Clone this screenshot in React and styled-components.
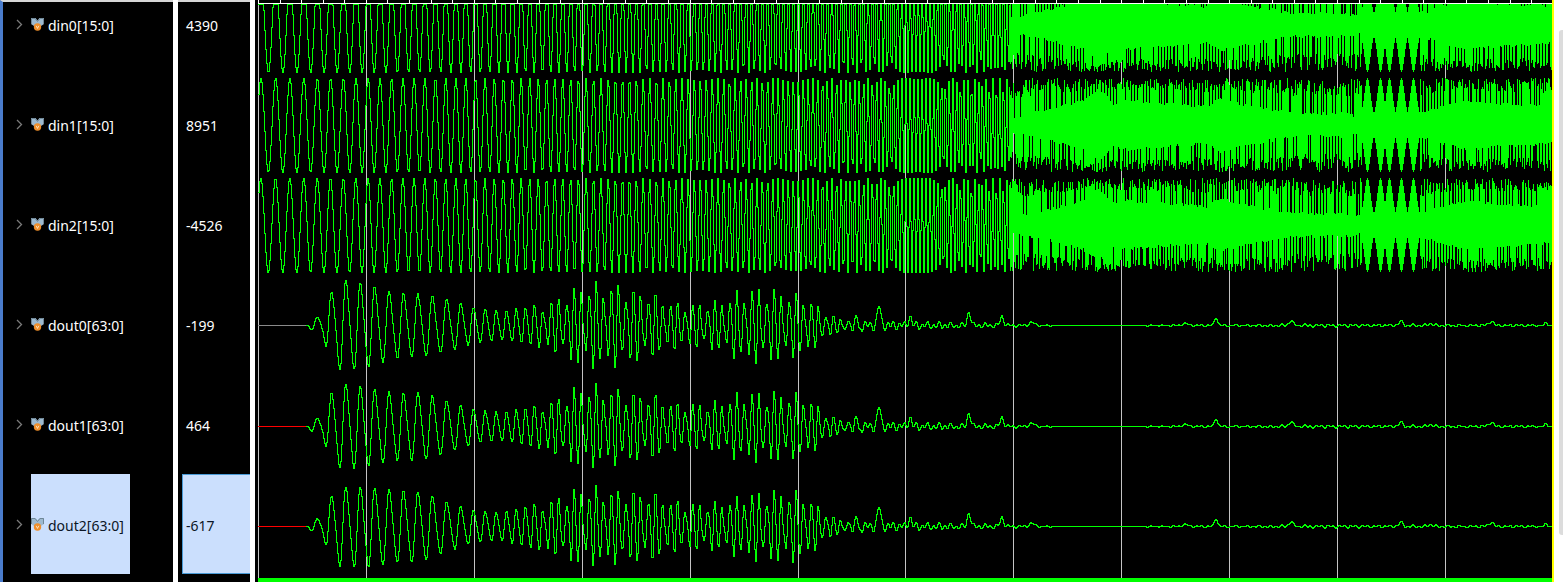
import React from "react"
import styled, { createGlobalStyle } from "styled-components"

const signals = [
    { name: "din0[15:0]", value: "4390" },
    { name: "din1[15:0]", value: "8951" },
    { name: "din2[15:0]", value: "-4526" },
    { name: "dout0[63:0]", value: "-199" },
    { name: "dout1[63:0]", value: "464" },
    { name: "dout2[63:0]", value: "-617", selected: true },
]

const LEFT = 258
const RIGHT = 1552
const CHIRP_END = 1010

const rng = (seed) => () => {
    seed = (seed + 0x6d2b79f5) | 0
    let t = Math.imul(seed ^ (seed >>> 15), 1 | seed)
    t = (t + Math.imul(t ^ (t >>> 7), 61 | t)) ^ t
    return ((t ^ (t >>> 14)) >>> 0) / 4294967296
}

const lerpTable = (table, x) => {
    if (x <= table[0][0]) return table[0][1]
    for (let i = 1; i < table.length; i++) {
        if (x <= table[i][0]) {
            const [x0, y0] = table[i - 1]
            const [x1, y1] = table[i]
            return y0 + ((y1 - y0) * (x - x0)) / (x1 - x0)
        }
    }
    return table[table.length - 1][1]
}

// chirp phase in cycles, t = pixels from the left edge
const chirpPhase = (t) => 0.067 * t + 0.00006 * t * t + (2.4e-7 * t * t * t) / 3

// half width of the solid core of the inputs, where the chirp has aliased
const coreTable = [
    [1010, 6], [1050, 14], [1083, 23], [1098, 35], [1113, 20], [1127, 23],
    [1160, 20], [1207, 17], [1220, 25], [1237, 20], [1293, 10], [1343, 10], [1360, 7],
    [1420, 10], [1443, 17], [1467, 23], [1493, 20], [1552, 17],
]
const leaves = [1367, 1380, 1389, 1401, 1413]

const dinPath = (center, phase, seed) => {
    const rand = rng(seed)
    const clip = (y) => Math.min(center + 47, Math.max(4, y))
    let d = `M${LEFT} ${Math.round(clip(center - 47 * Math.sin(phase))) + 0.5}`
    for (let x = LEFT + 1; x < CHIRP_END; x++) {
        const y = clip(center - 47 * Math.sin(phase + 2 * Math.PI * chirpPhase(x - LEFT)))
        d += `H${x + 0.5}V${Math.round(y) + 0.5}`
    }
    for (let x = CHIRP_END; x < RIGHT; x++) {
        const core = lerpTable(coreTable, x)
        const inLeaves = x > 1361 && x < 1420
        const leaf = leaves.reduce((m, c) => Math.max(m, Math.exp(-((x - c) ** 2) / 18)), 0)
        const reach = () => {
            if (inLeaves) return 8 + 39 * leaf
            const open = x % 3 === 0 ? 0.4 : 0.92
            if (rand() < open) return core + (47 - core) * (0.5 + rand() * 0.5)
            return core + rand() * 3
        }
        const top = Math.round(clip(center - reach()))
        const bottom = Math.round(clip(center + reach()))
        d += `M${x + 0.5} ${top}V${bottom}`
    }
    return d
}

const outEnvelope = [
    [306, 0], [312, 6], [322, 11], [328, 30], [340, 44], [362, 44], [395, 36], [425, 32], [450, 24], [475, 17],
    [500, 15], [525, 20], [550, 27], [575, 38], [590, 42], [625, 41], [655, 36], [668, 27], [690, 23], [720, 25],
    [745, 37], [775, 39], [805, 33], [822, 16], [838, 7], [860, 5], [905, 4], [1000, 2], [1030, 1], [1060, 0.3],
    [1120, 0.2], [1150, 0.6], [1300, 1.4], [1520, 1.2], [1552, 0.4],
]
const outBlips = [
    [878, 20, 1.6], [856, 6, 1.5], [909, 9, 1.6], [968, 14, 1.6], [1001, 9, 1.8], [1031, 3, 2.5], [1185, 2, 3],
    [1215, 8, 1.6], [1290, 5, 2], [1400, 4, 2], [1430, 2, 2], [1490, 4, 2.5], [1545, 3, 1.2],
]
const outFrequency = [[306, 0.0694], [450, 0.0694], [570, 0.135], [1552, 0.135]]

const doutPath = (center, seed) => {
    const rand = rng(seed)
    let d = `M306 ${center + 0.5}`
    // first big peak of the outputs sits at x = 331
    let cycles = 0.25 + (306 - 331) * 0.0694
    for (let x = 307; x < RIGHT; x++) {
        cycles += lerpTable(outFrequency, x)
        const env = lerpTable(outEnvelope, x)
        const beat = x > 540 && x < 860 ? 0.3 * Math.sin(2 * Math.PI * cycles * 1.37 + 0.6) : 0
        const wobble = x < 860 ? 0.94 + 0.06 * Math.sin(x * 0.047 + seed) + (rand() - 0.5) * 0.06 : 1
        const wave = (Math.sin(2 * Math.PI * cycles) + 0.14 * Math.sin(4 * Math.PI * cycles) + beat) / (beat ? 1.25 : 1)
        const noise = x >= 860 ? Math.sin(x * 1.1) * 0.7 + Math.sin(x * 0.53 + 1) * 0.5 : wave
        const bump = outBlips.reduce((sum, [c, a, w]) => sum + a * Math.exp(-((x - c) ** 2) / (2 * w * w)), 0)
        const y = Math.round(center - env * wobble * noise - bump)
        d += `H${x + 0.5}V${y + 0.5}`
    }
    return d
}

const gridLines = Array.from({ length: 12 }, (_, i) => Math.round(LEFT + i * 107.9))
const rulerTicks = Array.from({ length: 60 }, (_, i) => Math.round(LEFT + i * 21.58))

const inputs = [dinPath(25, 0.7, 11), dinPath(125, 0.73, 29), dinPath(225, 0.78, 53)]
const outputs = [doutPath(325, 5), doutPath(426, 6), doutPath(526, 7)]

const GlobalStyle = createGlobalStyle`
    html, body {
        margin: 0;
        background: #fff;
        overflow: hidden;
    }
`

const Page = styled.div`
    display: flex;
    width: 1563px;
    height: 582px;
    overflow: hidden;
    background: #fff;
    font-family: "Noto Sans", sans-serif;
    font-size: 14px;
`

const Panel = styled.div`
    flex: none;
    box-sizing: border-box;
    width: ${(p) => p.$width}px;
    height: 582px;
    margin-right: ${(p) => p.$gap}px;
    overflow: hidden;
    background: #000;
    border-top: 2px solid #d6d6d6;
`

const NamePanel = styled(Panel)`
    border-left: 3px solid #4a7ccb;
`

const RowList = styled.div`
    display: flex;
    flex-direction: column;
    margin-top: -28px;
`

const NameRow = styled.div`
    display: flex;
    align-items: center;
    height: 100px;
    padding-left: 13px;
`

const Chevron = styled.svg`
    flex: none;
    width: 7px;
    height: 11px;
    margin-right: 8px;
`

const NameCell = styled.div`
    display: flex;
    align-items: center;
    gap: 4px;
    width: 99px;
    height: 100px;
    color: ${(p) => (p.$selected ? "#0c1626" : "#fff")};
    background: ${(p) => (p.$selected ? "#cbdffd" : "transparent")};
`

const NameText = styled.span`
    padding-top: 2px;
`

const ValueRow = styled.div`
    display: flex;
    align-items: center;
    box-sizing: border-box;
    height: 100px;
    margin-left: 4px;
    padding: 2px 0 0 ${(p) => (p.$selected ? 3 : 4)}px;
    color: ${(p) => (p.$selected ? "#0c1626" : "#fff")};
    background: ${(p) => (p.$selected ? "#cbdffd" : "transparent")};
    border: ${(p) => (p.$selected ? "1px solid #4a9bd6" : "none")};
    border-right: none;
`

const Wave = styled.svg`
    display: block;
    flex: none;
    width: 1299px;
    height: 582px;
    background: #000;
`

const Gutter = styled.div`
    flex: 1;
    padding: 30px 0 0 5px;
`

const ScrollThumb = styled.div`
    height: 505px;
    background: #dcdcdc;
    border-radius: 3px 0 0 3px;
`

const PortIcon = () => (
    <svg width="13" height="13" viewBox="0 0 13 13" style={{ flex: "none" }}>
        <path d="M0 0h4.5l2 2.5 2-2.5H13v6l-3 2H3L0 6z" fill="#9db9cf" />
        <path d="M0.5 6V0.5h3.5l2.5 3 2.5-3h3.5V6" fill="none" stroke="#6f8797" />
        <circle cx="6.5" cy="9" r="3.7" fill="#ee8e2b" />
        <path d="M5.2 7.8l1.3 2.6 1.3-2.6" fill="none" stroke="#fff3d8" strokeWidth="0.8" />
    </svg>
)

const Signal = ({ name, selected }) => (
    <NameRow>
        <Chevron viewBox="0 0 7 11">
            <path d="M1 1l4.5 4.5L1 10" fill="none" stroke="#7a7a7a" strokeWidth="1.3" />
        </Chevron>
        <NameCell $selected={selected}>
            <PortIcon />
            <NameText>{name}</NameText>
        </NameCell>
    </NameRow>
)

const Waves = () => (
    <Wave viewBox="255 0 1299 582" shapeRendering="crispEdges">
        {gridLines.map((x) => (
            <rect key={x} x={x} y="4" width="1" height="574" fill="#c4c4c4" />
        ))}
        <rect x={LEFT} y="3" width={RIGHT - LEFT} height="1" fill="#fff" />
        {rulerTicks.map((x) => (
            <rect key={x} x={x} y="0" width="1" height="3" fill="#fff" />
        ))}
        {inputs.map((d, i) => (
            <path key={i} d={d} fill="none" stroke="#00ff00" />
        ))}
        <rect x={LEFT} y="325" width="48" height="1" fill="#8a8a8a" />
        <rect x={LEFT} y="426" width="48" height="1" fill="#ff0000" />
        <rect x={LEFT} y="526" width="48" height="1" fill="#ff0000" />
        {outputs.map((d, i) => (
            <path key={i} d={d} fill="none" stroke="#00ff00" />
        ))}
        <rect x={LEFT} y="578" width={RIGHT - LEFT} height="4" fill="#00ff00" />
        <rect x={RIGHT} y="0" width="2" height="582" fill="#ffff00" />
    </Wave>
)

export default function App() {
    return (
        <Page>
            <GlobalStyle />
            <NamePanel $width={173} $gap={5}>
                <RowList>
                    {signals.map((s) => (
                        <Signal key={s.name} name={s.name} selected={s.selected} />
                    ))}
                </RowList>
            </NamePanel>
            <Panel $width={72} $gap={5}>
                <RowList>
                    {signals.map((s) => (
                        <ValueRow key={s.name} $selected={s.selected}>
                            {s.value}
                        </ValueRow>
                    ))}
                </RowList>
            </Panel>
            <Waves />
            <Gutter>
                <ScrollThumb />
            </Gutter>
        </Page>
    )
}
